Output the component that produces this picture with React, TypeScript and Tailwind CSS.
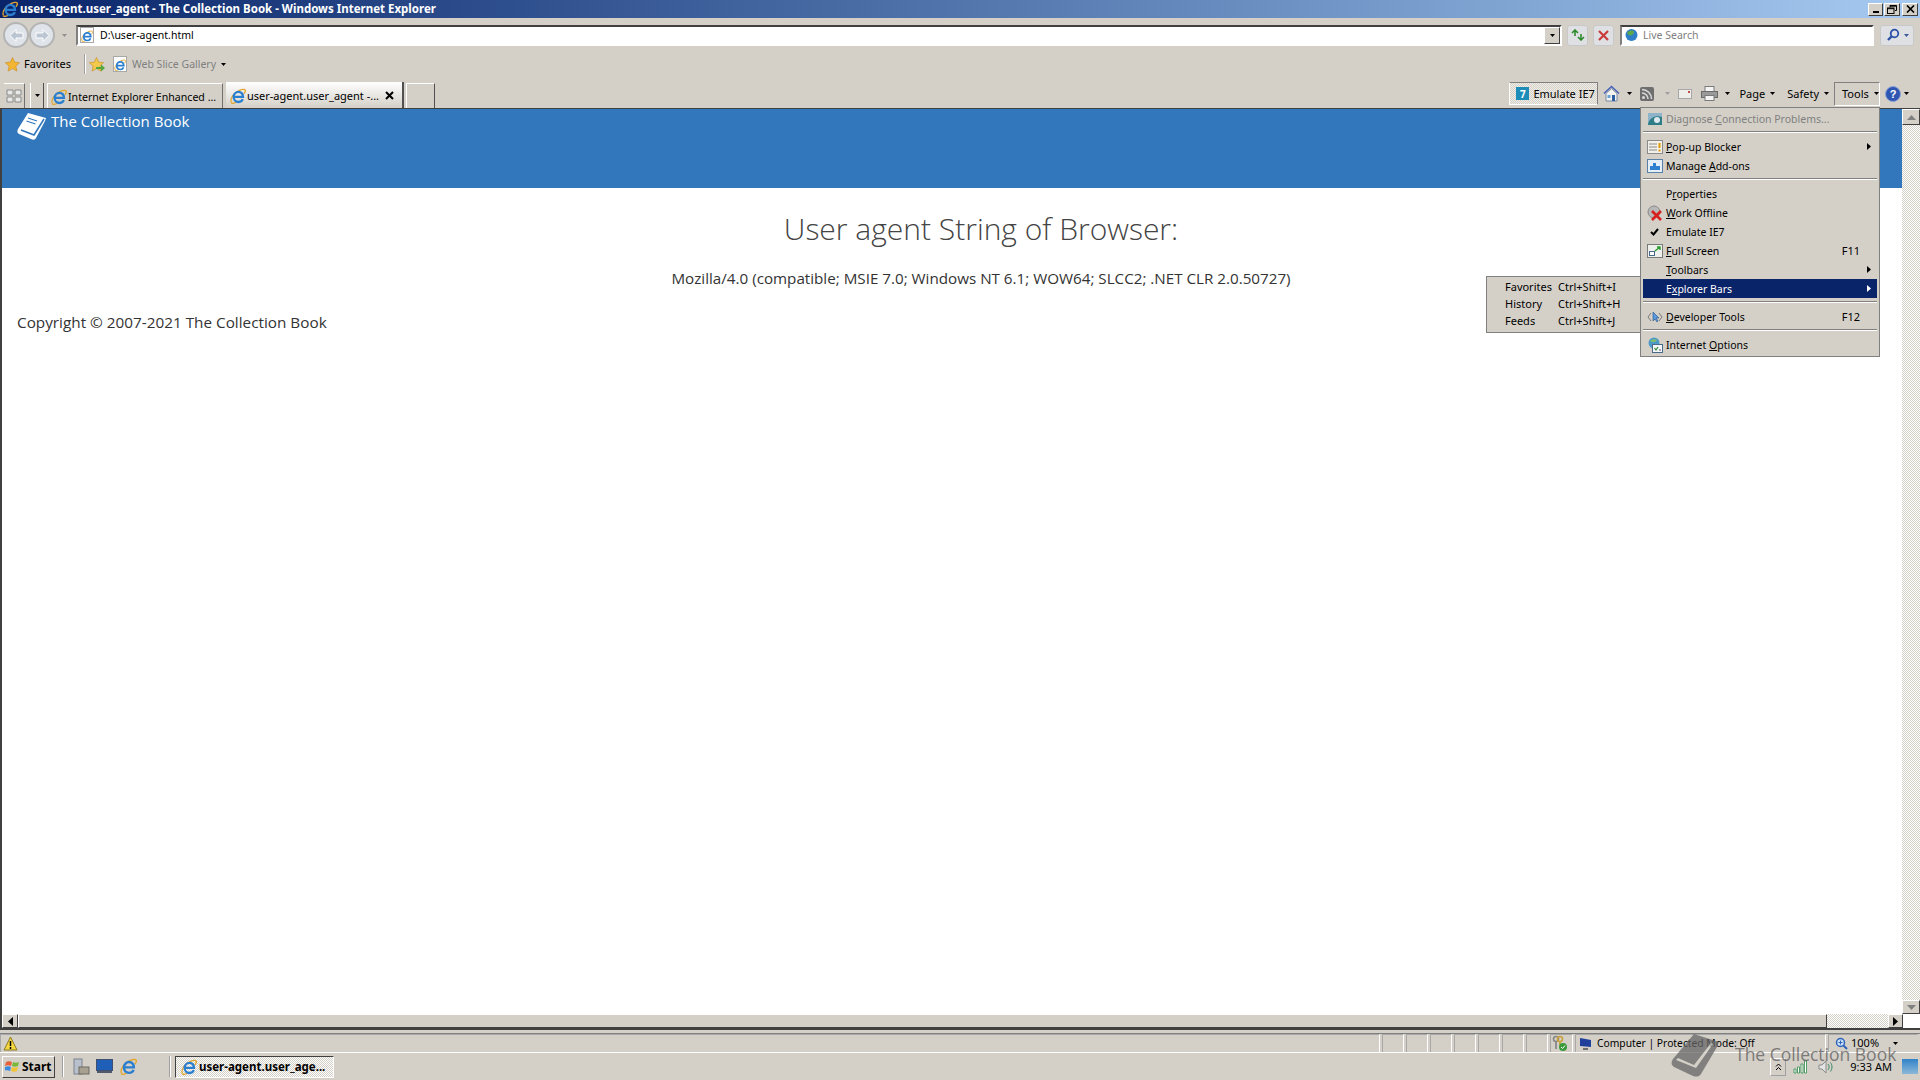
import React from 'react';

const raised = 'border border-t-white border-l-white border-r-[#404040] border-b-[#404040]';
const sunken = 'border-2 border-t-[#404040] border-l-[#808080] border-r-white border-b-white';
const checker = 'bg-[repeating-conic-gradient(#d4d0c8_0_25%,#ffffff_0_50%)] bg-size-[2px_2px]';

const IeIcon = ({ size = 16 }: { size?: number }) => (
  <svg width={size} height={size} viewBox="0 0 16 16" className="shrink-0">
    <path d="M1.500 14.500C-.5 11 4 5 8.500 2.800c3-1.500 6.200-2 6.800-.6.400 1-.4 2.400-1.500 3.600" fill="none" stroke="#e3a72f" strokeWidth="1.300" />
    <path d="M1.200 14.800c1.200 1.200 3.400.4 5-.5" fill="none" stroke="#e3a72f" strokeWidth="1.300" />
    <path d="M4 8.800h9C13 5.700 11 3.800 8.500 3.800S3.700 6 3.700 9s2.200 5 4.800 5c2 0 3.600-1 4.300-2.800" fill="none" stroke="#2a7fd0" strokeWidth="2.300" />
  </svg>
);

const PageIeIcon = () => (
  <div className="relative h-[16px] w-[14px] shrink-0 border border-[#a8a8a8] bg-white">
    <div className="absolute left-0 top-[2px]">
      <IeIcon size={12} />
    </div>
  </div>
);

const Caret = ({ className = 'text-black' }: { className?: string }) => (
  <svg width="5" height="3" viewBox="0 0 5 3" className={`shrink-0 ${className}`}>
    <path d="M0 0h5L2.500 3z" fill="currentColor" />
  </svg>
);

const BookIcon = ({ className = '' }: { className?: string }) => (
  <svg viewBox="0 0 32 32" className={className}>
    <path d="M12 3 30 8l-1 3-9 17c-1 2-3 2-5 1L3 24c-2-1-2-3-1-5z" fill="currentColor" />
    <path d="M5 20l13 5 10-16" fill="none" stroke="#3277bb" strokeWidth="1.600" />
    <path d="M12 8l9 3M10.500 11l9 3" stroke="#3277bb" strokeWidth="1.200" />
  </svg>
);

const NavButton = ({ flip = false }: { flip?: boolean }) => (
  <div className="flex h-[26px] w-[26px] items-center justify-center rounded-full border-2 border-[#b4b4b4] bg-[#dfe4ea]">
    <svg width="15" height="13" viewBox="0 0 15 13" className={flip ? 'rotate-180' : ''}>
      <path d="M7 .5 1 6.500l6 6V9h7V4H7z" fill="#bcc6d2" stroke="#fff" />
    </svg>
  </div>
);

const SmallBtn = ({ children, className = '' }: { children: React.ReactNode; className?: string }) => (
  <div className={`flex h-[21px] items-center justify-center rounded-[3px] border border-[#c8c8c8] bg-[#dfe0e4] ${className}`}>{children}</div>
);

const TabRowItem = ({ label, caret = true }: { label: string; caret?: boolean }) => (
  <div className="flex items-center gap-[5px]">
    <span>{label}</span>
    {caret && <Caret />}
  </div>
);

const MenuItem = ({
  icon,
  children,
  hint,
  arrow,
  disabled,
  active,
}: {
  icon?: React.ReactNode;
  children: React.ReactNode;
  hint?: string;
  arrow?: boolean;
  disabled?: boolean;
  active?: boolean;
}) => (
  <div className={`flex h-[19px] items-center ${active ? 'bg-[#0a246a] text-white' : disabled ? 'text-[#808080]' : 'text-black'}`}>
    <div className="flex w-[23px] shrink-0 items-center justify-center">{icon}</div>
    <div className="flex-1">{children}</div>
    {hint && <div className="mr-[17px] text-[11px]">{hint}</div>}
    {arrow && (
      <svg width="4" height="7" viewBox="0 0 4 7" className="mr-[6px]">
        <path d="M0 0l4 3.500L0 7z" fill="currentColor" />
      </svg>
    )}
  </div>
);

const MenuSep = () => <div className="mb-[4px] mt-[3px] h-[2px] border-t border-b border-t-[#808080] border-b-white" />;

const Shortcut = ({ label, keys }: { label: string; keys: string }) => (
  <div className="flex h-[17px] items-center">
    <div className="w-[53px]">{label}</div>
    <div>{keys}</div>
  </div>
);

const ToolsMenu = () => (
  <div className="absolute left-[1640px] top-[107px] z-20 h-[250px] w-[240px] border border-[#808080] bg-[#d4d0c8] px-[2px] pt-[1px]">
    <MenuItem
      disabled
      icon={
        <svg width="16" height="14" viewBox="0 0 16 14">
          <rect x="1" y="1" width="14" height="12" fill="#8fb3c8" />
          <path d="M1 12c2-7 8-9 14-7v8H1z" fill="#2f7d86" />
          <circle cx="10" cy="8" r="3" fill="#dfe8ee" />
        </svg>
      }
    >
      Diagnose <u>C</u>onnection Problems...
    </MenuItem>
    <MenuSep />
    <MenuItem
      arrow
      icon={
        <svg width="16" height="14" viewBox="0 0 16 14">
          <rect x=".5" y=".5" width="15" height="13" fill="#f2f0e8" stroke="#8a8a8a" />
          <path d="M2 4h8M2 7h8M2 10h8" stroke="#8a8a8a" />
          <path d="M12.500 3v5M12.500 9.500v2" stroke="#e09a00" strokeWidth="2" />
        </svg>
      }
    >
      <u>P</u>op-up Blocker
    </MenuItem>
    <MenuItem
      icon={
        <svg width="16" height="14" viewBox="0 0 16 14">
          <rect x=".5" y=".5" width="15" height="13" fill="#e4eef8" stroke="#5a80a8" />
          <path d="M3 10V7h3V4h3v3h4v4H3z" fill="#2e7fd0" />
        </svg>
      }
    >
      Manage <u>A</u>dd-ons
    </MenuItem>
    <MenuSep />
    <MenuItem>
      P<u>r</u>operties
    </MenuItem>
    <MenuItem
      icon={
        <svg width="16" height="16" viewBox="0 0 16 16">
          <circle cx="7" cy="7" r="6" fill="#b8b8b8" stroke="#8a8a8a" />
          <path d="M5 6l9 9M14 6l-9 9" stroke="#d81e1e" strokeWidth="2.600" />
        </svg>
      }
    >
      <u>W</u>ork Offline
    </MenuItem>
    <MenuItem
      icon={
        <svg width="9" height="8" viewBox="0 0 9 8">
          <path d="M1 4l2.500 2.500L8 1" fill="none" stroke="#000" strokeWidth="2" />
        </svg>
      }
    >
      Emulate IE7
    </MenuItem>
    <MenuItem
      hint="F11"
      icon={
        <svg width="16" height="14" viewBox="0 0 16 14">
          <rect x=".5" y=".5" width="15" height="13" fill="#eef0ee" stroke="#7a7a7a" />
          <rect x="2.500" y="7.500" width="5" height="4" fill="#fff" stroke="#4a6a8a" />
          <path d="M8 7l5-4M10 3h3v3" fill="none" stroke="#2c9a2c" strokeWidth="1.400" />
        </svg>
      }
    >
      <u>F</u>ull Screen
    </MenuItem>
    <MenuItem arrow>
      <u>T</u>oolbars
    </MenuItem>
    <MenuItem arrow active>
      E<u>x</u>plorer Bars
    </MenuItem>
    <MenuSep />
    <MenuItem
      hint="F12"
      icon={
        <svg width="16" height="14" viewBox="0 0 16 14">
          <path d="M4 3 1 7l3 4M12 3l3 4-3 4" fill="none" stroke="#7a7a7a" />
          <path d="M6 2v9l2-2 2 3 1-1-2-3h3z" fill="#5a9be0" stroke="#1e4f8a" strokeWidth=".6" />
        </svg>
      }
    >
      <u>D</u>eveloper Tools
    </MenuItem>
    <MenuSep />
    <MenuItem
      icon={
        <svg width="16" height="16" viewBox="0 0 16 16">
          <circle cx="7" cy="6" r="5.500" fill="#4c9ac8" />
          <path d="M3 4c2-2 5-2 7-1-1 2-4 3-7 1z" fill="#7fbf6a" />
          <rect x="5.500" y="7.500" width="10" height="8" fill="#f2f6fa" stroke="#4a6a8a" />
          <path d="M7.500 11l1.500 2 2-3" fill="none" stroke="#2e8a2e" strokeWidth="1.200" />
          <path d="M12 13h2" stroke="#555" />
        </svg>
      }
    >
      Internet <u>O</u>ptions
    </MenuItem>
  </div>
);

const ExplorerSubmenu = () => (
  <div className="absolute left-[1486px] top-[276px] z-10 h-[57px] w-[157px] border border-[#808080] bg-[#d4d0c8] py-[1px] pl-[18px] text-[11px]">
    <Shortcut label="Favorites" keys="Ctrl+Shift+I" />
    <Shortcut label="History" keys="Ctrl+Shift+H" />
    <Shortcut label="Feeds" keys="Ctrl+Shift+J" />
  </div>
);

const TitleBar = () => (
  <div className="flex h-[18px] items-center bg-gradient-to-r from-[#0a246a] to-[#a6caf0] pl-[2px] pr-[2px]">
    <IeIcon size={16} />
    <span className="ml-[2px] flex-1 text-[11.500px] font-bold text-white">user-agent.user_agent - The Collection Book - Windows Internet Explorer</span>
    <div className={`flex h-[13px] w-[15px] items-end justify-center bg-[#d4d0c8] pb-[2px] ${raised}`}>
      <div className="h-[2px] w-[6px] bg-black" />
    </div>
    <div className={`ml-[1px] flex h-[13px] w-[16px] items-center justify-center bg-[#d4d0c8] ${raised}`}>
      <svg width="10" height="9" viewBox="0 0 10 9">
        <path d="M3 .5h6.500v5H8M3 .5v2M3 1.200h6.500" fill="none" stroke="#000" />
        <rect x=".5" y="3" width="6.500" height="5.500" fill="none" stroke="#000" />
        <path d="M.5 3.700h6.500" stroke="#000" />
      </svg>
    </div>
    <div className={`ml-[2px] flex h-[13px] w-[16px] items-center justify-center bg-[#d4d0c8] ${raised}`}>
      <svg width="9" height="8" viewBox="0 0 9 8">
        <path d="M1 .5l7 7M8 .5l-7 7" stroke="#000" strokeWidth="1.700" />
      </svg>
    </div>
  </div>
);

const AddressRow = () => (
  <div className="flex h-[30px] items-center pl-[3px] pt-[4px]">
    <div className="flex">
      <NavButton />
      <NavButton flip />
    </div>
    <Caret className="ml-[7px] text-[#909090]" />
    <div className={`ml-[9px] flex h-[21px] flex-1 items-center bg-white pl-[2px] ${sunken}`}>
      <PageIeIcon />
      <span className="ml-[6px] flex-1">D:\user-agent.html</span>
      <div className={`flex h-full w-[16px] items-center justify-center bg-[#d4d0c8] ${raised}`}>
        <Caret />
      </div>
    </div>
    <SmallBtn className="ml-[5px] w-[21px]">
      <svg width="14" height="12" viewBox="0 0 14 12">
        <path d="M1 4l3-3 3 3M4 1v6M7 8l3 3 3-3M10 11V5" fill="none" stroke="#2f8a2f" strokeWidth="1.600" />
      </svg>
    </SmallBtn>
    <SmallBtn className="ml-[5px] w-[21px]">
      <svg width="11" height="11" viewBox="0 0 11 11">
        <path d="M1 1l9 9M10 1l-9 9" stroke="#c93a3a" strokeWidth="2.200" />
      </svg>
    </SmallBtn>
    <div className={`ml-[6px] flex h-[21px] w-[254px] items-center bg-white pl-[2px] ${sunken}`}>
      <svg width="15" height="15" viewBox="0 0 15 15">
        <circle cx="7.500" cy="7" r="6" fill="#2f7fc8" />
        <path d="M3 5c2-3 6-3 7-1 0 3-4 4-5 3z" fill="#5aa84a" />
      </svg>
      <span className="ml-[4px] text-[#808080]">Live Search</span>
    </div>
    <SmallBtn className="ml-[6px] mr-[6px] w-[34px] gap-[4px]">
      <svg width="14" height="14" viewBox="0 0 14 14">
        <circle cx="8.500" cy="5.500" r="3.800" fill="none" stroke="#2a4fa8" strokeWidth="1.800" />
        <path d="M6 8l-4 4" stroke="#2a4fa8" strokeWidth="2.400" />
      </svg>
      <Caret className="text-[#3a5a9a]" />
    </SmallBtn>
  </div>
);

const FavoritesRow = () => (
  <div className="flex h-[30px] items-center pl-[5px] pt-[2px]">
    <svg width="15" height="15" viewBox="0 0 15 15">
      <path d="M7.500.5l2.100 4.600 5 .6-3.700 3.400 1 5-4.400-2.500-4.400 2.500 1-5L.4 5.700l5-.6z" fill="#f2b632" stroke="#c98a1a" strokeWidth=".6" />
    </svg>
    <span className="ml-[4px] text-[11px]">Favorites</span>
    <div className="ml-[13px] h-[20px] w-[2px] border-l border-r border-l-[#a0a0a0] border-r-white" />
    <svg width="17" height="15" viewBox="0 0 17 15" className="ml-[3px]">
      <path d="M7.500.5l2.100 4.600 5 .6-3.700 3.400 1 5-4.400-2.500-4.400 2.500 1-5L.4 5.700l5-.6z" fill="#f2c94c" stroke="#c98a1a" strokeWidth=".6" />
      <path d="M7 10h5V7.500l4 3.500-4 3.500V12H7z" fill="#54a83a" />
    </svg>
    <div className="ml-[7px]">
      <PageIeIcon />
    </div>
    <span className="ml-[5px] text-[#808080]">Web Slice Gallery</span>
    <Caret className="ml-[5px]" />
  </div>
);

const TabsRow = () => (
  <div className="flex h-[30px] items-end pl-[4px]">
    <div className="flex h-[25px] w-[21px] items-center justify-center border-r border-t border-r-[#707070] border-t-white">
      <svg width="16" height="14" viewBox="0 0 16 14">
        <path d="M1 1h6v5H1zM9 1h6v5H9zM1 8h6v5H1zM9 8h6v5H9z" fill="#e8e8e8" stroke="#8a8a8a" />
      </svg>
    </div>
    <div className="ml-[5px] flex h-[25px] w-[14px] items-center justify-center border-l border-r border-l-white border-r-[#505050]">
      <Caret />
    </div>
    <div className="ml-[3px] flex h-[25px] w-[176px] items-center gap-[1px] whitespace-nowrap border-l border-r border-t border-l-white border-r-[#707070] border-t-white pl-[3px] pt-[2px] text-[10.600px]">
      <IeIcon size={16} />
      <span>Internet Explorer Enhanced ...</span>
    </div>
    <div className="ml-[3px] flex h-[26px] w-[178px] items-center gap-[1px] whitespace-nowrap border-r-2 border-r-[#505050] bg-gradient-to-b from-white to-[#d4d0c8] pl-[4px] pt-[1px] text-[11px]">
      <IeIcon size={16} />
      <span className="flex-1">user-agent.user_agent -...</span>
      <svg width="9" height="9" viewBox="0 0 9 9" className="mr-[8px]">
        <path d="M1 1l7 7M8 1 1 8" stroke="#000" strokeWidth="2" />
      </svg>
    </div>
    <div className="ml-[2px] h-[25px] w-[29px] border-l border-r border-t border-l-white border-r-[#505050] border-t-white" />
    <div className="flex-1" />
    <div className="mb-[3px] flex h-[23px] w-[89px] items-center border border-t-[#808080] border-l-white border-r-[#808080] border-b-white bg-[repeating-conic-gradient(#d4d0c8_0_25%,#f0eee8_0_50%)] bg-size-[2px_2px] pl-[6px]">
      <div className="flex h-[13px] w-[13px] items-center justify-center bg-[#1c8cb8] text-[10px] font-bold leading-none text-white">7</div>
      <span className="ml-[4px] text-[11px]">Emulate IE7</span>
    </div>
    <div className="mb-[3px] flex h-[23px] items-center">
      <svg width="17" height="17" viewBox="0 0 17 17" className="ml-[5px]">
        <path d="M1 8.500 8.500 1.500 16 8.500" fill="none" stroke="#4a62b8" strokeWidth="1.600" />
        <path d="M3 8.500V16h11V8.500L8.500 3.500z" fill="#f4f4ee" stroke="#7a8aa8" />
        <rect x="9" y="10" width="3" height="6" fill="#2e5ea0" />
        <rect x="4.500" y="10" width="3" height="3" fill="#6aa0d8" />
      </svg>
      <Caret className="ml-[7px]" />
      <svg width="14" height="14" viewBox="0 0 14 14" className="ml-[8px]">
        <rect width="14" height="14" rx="2" fill="#6f6f6f" />
        <circle cx="3.500" cy="10.500" r="1.500" fill="#d8d8d8" />
        <path d="M2 6a6 6 0 0 1 6 6M2 2.500A9.500 9.500 0 0 1 11.500 12" fill="none" stroke="#d8d8d8" strokeWidth="1.600" />
      </svg>
      <Caret className="ml-[11px] text-[#a0a0a0]" />
      <svg width="14" height="10" viewBox="0 0 14 10" className="ml-[8px]">
        <rect x=".5" y=".5" width="13" height="9" fill="#eeeeea" stroke="#a8a8a8" />
        <rect x="10" y="2" width="2" height="2" fill="#c84a4a" />
      </svg>
      <svg width="17" height="15" viewBox="0 0 17 15" className="ml-[9px]">
        <rect x="4" y=".5" width="9" height="5" fill="#f4f4f4" stroke="#7a7a7a" />
        <rect x=".5" y="5.500" width="16" height="6" fill="#9a9a9a" stroke="#6a6a6a" />
        <rect x="4" y="9.500" width="9" height="5" fill="#f4f4f4" stroke="#7a7a7a" />
      </svg>
      <Caret className="ml-[7px]" />
      <div className="ml-[9px] flex items-center gap-[12px] text-[11px]">
        <TabRowItem label="Page" />
        <TabRowItem label="Safety" />
      </div>
      <div className="ml-[5px] flex h-[24px] w-[46px] items-center gap-[5px] border border-t-[#808080] border-l-[#808080] border-r-white border-b-white pl-[7px] text-[11px]">
        <span>Tools</span>
        <Caret />
      </div>
      <svg width="16" height="16" viewBox="0 0 16 16" className="ml-[5px]">
        <circle cx="8" cy="8" r="7.500" fill="#2f56b0" stroke="#8aa0d8" />
        <text x="8" y="12" textAnchor="middle" fontSize="11" fontWeight="700" fill="#fff" fontFamily="Liberation Sans, sans-serif">
          ?
        </text>
      </svg>
      <Caret className="ml-[3px] mr-[11px]" />
    </div>
  </div>
);

const ScrollArrow = ({ rotate = '' }: { rotate?: string }) => (
  <svg width="9" height="5" viewBox="0 0 9 5" className={rotate}>
    <path d="M0 5h9L4.500 0z" fill="currentColor" />
  </svg>
);

const PageBody = () => (
  <div className="flex min-h-0 flex-1 border-l-2 border-t border-l-[#404040] border-t-[#404040] bg-white">
    <div className="flex min-w-0 flex-1 flex-col font-['Open_Sans',sans-serif]">
      <div className="flex h-[79px] items-start bg-[#3277bb] pl-[14px] pt-[1px] text-white">
        <BookIcon className="h-[32px] w-[32px] text-white" />
        <span className="ml-[3px] text-[15px] leading-[22px]">The Collection Book</span>
      </div>
      <div className="pl-[58px] pt-[21px] text-center">
        <h1 className="text-[30px] font-light leading-[40px] text-[#444444]">User agent String of Browser:</h1>
        <p className="mt-[18px] text-[15.200px] leading-[22px] text-[#333333]">Mozilla/4.0 (compatible; MSIE 7.0; Windows NT 6.1; WOW64; SLCC2; .NET CLR 2.0.50727)</p>
      </div>
      <p className="mt-[22px] pl-[15px] text-[15.300px] leading-[22px] text-[#333333]">Copyright © 2007-2021 The Collection Book</p>
    </div>
    <div className={`flex w-[18px] flex-col justify-between ${checker}`}>
      <div className={`flex h-[16px] items-center justify-center bg-[#d4d0c8] text-[#808080] ${raised}`}>
        <ScrollArrow />
      </div>
      <div className={`flex h-[14px] items-center justify-center bg-[#d4d0c8] text-[#808080] ${raised}`}>
        <ScrollArrow rotate="rotate-180" />
      </div>
    </div>
  </div>
);

const HScrollBar = () => (
  <div className="flex h-[16px] border-b-2 border-l-2 border-b-[#404040] border-l-[#404040] bg-white pr-[17px]">
    <div className={`flex w-[16px] items-center justify-center bg-[#d4d0c8] text-black ${raised}`}>
      <ScrollArrow rotate="-rotate-90" />
    </div>
    <div className={`w-[1809px] bg-[#d4d0c8] ${raised}`} />
    <div className={`flex-1 ${checker}`} />
    <div className={`flex w-[15px] items-center justify-center bg-[#d4d0c8] text-black ${raised}`}>
      <ScrollArrow rotate="rotate-90" />
    </div>
  </div>
);

const StatusCell = ({ w, children }: { w: string; children?: React.ReactNode }) => (
  <div className={`flex h-[19px] items-center border border-t-[#a8a8a8] border-l-[#a8a8a8] border-r-white border-b-white ${w}`}>{children}</div>
);

const StatusBar = () => (
  <div className="mt-[3px] flex h-[19px] items-center gap-[2px] border-t border-t-[#808080] pr-[2px]">
    <StatusCell w="flex-1">
      <svg width="15" height="15" viewBox="0 0 15 15" className="ml-[2px]">
        <path d="M7.500 1 14 14H1z" fill="#f5d742" stroke="#8a7a20" />
        <path d="M7.500 5v5M7.500 11v2" stroke="#000" strokeWidth="1.500" />
      </svg>
    </StatusCell>
    {['a', 'b', 'c', 'd', 'e', 'f', 'g'].map((k) => (
      <StatusCell key={k} w="w-[22px]" />
    ))}
    <StatusCell w="w-[23px]">
      <svg width="17" height="17" viewBox="0 0 17 17">
        <circle cx="5" cy="4" r="2.500" fill="none" stroke="#888" strokeWidth="1.600" />
        <path d="M5 6.500V14" stroke="#888" strokeWidth="1.800" />
        <circle cx="9" cy="4" r="2.500" fill="none" stroke="#c9a23a" strokeWidth="1.600" />
        <path d="M9 6.500V10" stroke="#c9a23a" strokeWidth="1.800" />
        <circle cx="12" cy="12" r="4" fill="#3a9a3a" />
        <path d="M10 12l1.500 1.500L14 10.500" fill="none" stroke="#fff" />
      </svg>
    </StatusCell>
    <StatusCell w="w-[251px]">
      <svg width="15" height="15" viewBox="0 0 15 15" className="ml-[2px]">
        <path d="M2 2l11 2v7l-11-1z" fill="#1f3f9a" />
        <path d="M5 12h5v2H5z" fill="#707070" />
      </svg>
      <span className="ml-[4px] text-[10.300px]">Computer | Protected Mode: Off</span>
    </StatusCell>
    <div className="flex h-[19px] w-[90px] items-center border border-t-[#a8a8a8] border-l-[#a8a8a8] border-r-[#d4d0c8] border-b-white pl-[6px]">
      <svg width="13" height="13" viewBox="0 0 13 13">
        <circle cx="5.500" cy="5.500" r="4" fill="#c8e0f8" stroke="#2f62b8" strokeWidth="1.500" />
        <path d="M8.500 8.500l3.500 3.500" stroke="#2f62b8" strokeWidth="2" />
        <path d="M3.500 5.500h4M5.500 3.500v4" stroke="#2f62b8" />
      </svg>
      <span className="ml-[3px] flex-1 text-[11px]">100%</span>
      <Caret className="mr-[19px]" />
    </div>
  </div>
);

const Taskbar = () => (
  <div className="flex h-[28px] items-center border-t border-t-white pl-[2px]">
    <div className={`flex h-[22px] w-[53px] items-center bg-[#d4d0c8] pl-[2px] text-[12px] font-bold ${raised}`}>
      <svg width="15" height="15" viewBox="0 0 15 15">
        <path d="M1 3c2-1 4-1 6 0l-1 4C4 6 2 6 0 7z" fill="#e8603a" />
        <path d="M8 3c2 1 4 1 6 0l-1 4c-2 1-4 1-6 0z" fill="#7ab83a" />
        <path d="M0 8c2-1 4-1 6 0l-1 4c-2-1-4-1-6 0z" fill="#3a8ae0" />
        <path d="M7 8c2 1 4 1 6 0l-1 4c-2 1-4 1-6 0z" fill="#f2c232" />
      </svg>
      <span className="ml-[2px]">Start</span>
    </div>
    <div className="ml-[7px] h-[21px] w-[2px] border-l border-r border-l-[#a0a0a0] border-r-white" />
    <svg width="17" height="17" viewBox="0 0 17 17" className="ml-[9px]">
      <rect x="1" y="1" width="8" height="15" fill="#b8c0cc" stroke="#7a8290" />
      <rect x="6" y="9" width="10" height="7" fill="#a8a090" stroke="#6a6a60" />
    </svg>
    <svg width="17" height="15" viewBox="0 0 17 15" className="ml-[6px]">
      <rect x=".5" y=".5" width="16" height="11" fill="#1f5fb8" stroke="#405070" />
      <rect x="1" y="12" width="15" height="2" fill="#50586a" />
    </svg>
    <div className="ml-[7px]">
      <IeIcon size={17} />
    </div>
    <div className="ml-[32px] h-[21px] w-[2px] border-l border-r border-l-[#a0a0a0] border-r-white" />
    <div className={`ml-[4px] flex h-[22px] w-[159px] items-center border border-t-[#404040] border-l-[#404040] border-r-white border-b-white pl-[5px] text-[11.500px] font-bold ${checker}`}>
      <IeIcon size={16} />
      <span className="ml-[2px]">user-agent.user_age...</span>
    </div>
    <div className="flex-1" />
    <div className="flex h-[18px] w-[16px] items-center justify-center border border-[#a0a0a0] border-l-white border-t-white text-[9px] font-bold leading-none">
      <svg width="7" height="8" viewBox="0 0 7 8">
        <path d="M1 3.500 3.500 1 6 3.500M1 7l2.500-2.500L6 7" fill="none" stroke="#000" />
      </svg>
    </div>
    <svg width="16" height="14" viewBox="0 0 16 14" className="ml-[7px]">
      <path d="M1 9h2v4H1zM4.500 7h2v6h-2zM8 4h2v9H8zM11.500 1h2v12h-2z" fill="#ffffff" stroke="#2f8a4a" strokeWidth=".8" />
    </svg>
    <svg width="16" height="14" viewBox="0 0 16 14" className="ml-[9px]">
      <path d="M1 5h3l4-4v12L4 9H1z" fill="#e4e4e4" stroke="#8a8a8a" />
      <path d="M10 4c1.500 2 1.500 4 0 6M12.500 2.500c2 3 2 6 0 9" fill="none" stroke="#3a8a6a" />
    </svg>
    <span className="ml-[16px] text-[11px]">9:33 AM</span>
    <div className="ml-[10px] mr-[2px] h-[15px] w-[16px] bg-gradient-to-b from-[#2f82c8] to-[#8ab8d8]" />
  </div>
);

const Watermark = () => (
  <div className="pointer-events-none absolute left-[1670px] top-[1032px] z-30 flex items-start text-[#555555]">
    <svg width="50" height="46" viewBox="0 0 50 46" className="opacity-75">
      <path d="M24 2 49 10 47 15 31 42c-2 3-5 3-8 2L4 35c-3-2-3-5-1-8z" fill="#666666" />
      <path d="M6 28l20 8 17-24-2-1-17 22-16-7z" fill="#d4d0c8" />
    </svg>
    <span className="ml-[15px] mt-[9px] font-['Open_Sans',sans-serif] text-[17.500px] leading-[26px] opacity-70">The Collection Book</span>
  </div>
);

const App = () => {
  return (
    <div className="relative flex h-[1080px] w-[1920px] flex-col overflow-hidden bg-[#d4d0c8] font-['Noto_Sans',sans-serif] text-[10.500px] leading-[14px] text-black">
      <TitleBar />
      <AddressRow />
      <FavoritesRow />
      <TabsRow />
      <PageBody />
      <HScrollBar />
      <StatusBar />
      <Taskbar />
      <ToolsMenu />
      <ExplorerSubmenu />
      <Watermark />
    </div>
  );
};

export default App;
